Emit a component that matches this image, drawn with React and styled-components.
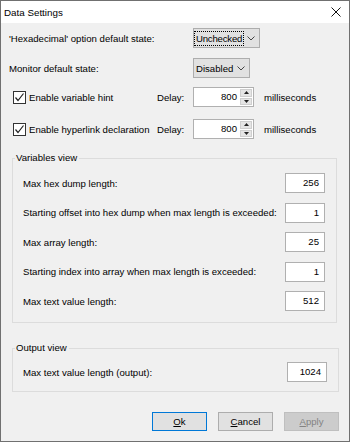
import React from 'react'
import styled, { createGlobalStyle } from 'styled-components'

const Global = createGlobalStyle`
  html, body { margin:0; padding:0; background:#f0f0f0; }
  body {
    font-family:"Liberation Sans", Arial, sans-serif;
    font-size:9.6px;
    color:#000;
    white-space:nowrap;
  }
`

const Window = styled.div`
  width:350px;
  height:442px;
  box-sizing:border-box;
  border:1px solid #707070;
  background:#f0f0f0;
  display:flex;
  flex-direction:column;
`

const TitleBar = styled.div`
  height:22px;
  background:#fff;
  display:flex;
  align-items:center;
  justify-content:space-between;
  padding:0 8px 0 3px;
  font-size:9.8px;
`

const Body = styled.div`
  display:flex;
  flex-direction:column;
  padding:5px 10px 0 8px;
`

const Row = styled.div`
  display:grid;
  grid-template-columns:${p => p.$cols};
  align-items:center;
  height:20px;
  margin-top:${p => p.$gap || 0}px;
`

const Combo = styled.div`
  box-sizing:border-box;
  width:${p => p.$w}px;
  height:20px;
  background:#e1e1e1;
  border:1px solid #adadad;
  display:flex;
  align-items:center;
  justify-content:space-between;
  padding:0 4px 0 2px;
`

const Focus = styled.span`
  outline:1px dotted #000;
  outline-offset:1px;
  letter-spacing:-0.2px;
`

const Check = styled.label`
  display:flex;
  align-items:center;
  gap:3px;
  padding-left:4px;
`

const Box = styled.span`
  box-sizing:border-box;
  width:13px;
  height:13px;
  border:1px solid #333;
  background:#fff;
  display:flex;
  align-items:center;
  justify-content:center;
`

const Spin = styled.div`
  box-sizing:border-box;
  width:61px;
  height:20px;
  border:1px solid #b0b0b0;
  background:#fff;
  display:flex;
  align-items:stretch;
`

const SpinValue = styled.span`
  flex:1;
  text-align:right;
  padding-right:3px;
  line-height:18px;
`

const SpinBtns = styled.div`
  width:12px;
  display:flex;
  flex-direction:column;
  gap:1px;
  padding:1px 1px 1px 0;
`

const SpinBtn = styled.span`
  flex:1;
  background:#e5e5e5;
  border:1px solid #cfcfcf;
  display:flex;
  align-items:center;
  justify-content:center;
`

const Ms = styled.span`
  padding-left:10px;
`

const Group = styled.fieldset`
  margin:${p => p.$top}px ${p => p.$right}px 0 3px;
  padding:${p => p.$pt}px 11px ${p => p.$pb}px 10px;
  border:1px solid #dcdcdc;
  display:flex;
  flex-direction:column;
  gap:9.5px;
  min-width:0;
`

const Legend = styled.legend`
  padding:0 2px 0 1px;
  margin-left:-8px;
  line-height:12px;
`

const NumBox = styled.div`
  box-sizing:border-box;
  width:40px;
  height:20px;
  border:1px solid #b0b0b0;
  background:#fff;
  text-align:right;
  padding-right:5px;
  line-height:18px;
  justify-self:end;
`

const Buttons = styled.div`
  display:flex;
  justify-content:flex-end;
  gap:11px;
  margin-top:20px;
`

const Button = styled.div`
  box-sizing:border-box;
  width:55px;
  height:19px;
  display:flex;
  align-items:center;
  justify-content:center;
  background:${p => (p.$disabled ? '#cccccc' : '#e1e1e1')};
  border:1px solid ${p => (p.$default ? '#0078d7' : p.$disabled ? '#bfbfbf' : '#adadad')};
  color:${p => (p.$disabled ? '#838383' : '#000')};
  u { text-decoration:underline; }
`

const Chevron = () => (
  <svg width="8" height="5" viewBox="0 0 8 5">
    <path d="M0.5 0.5 L4 4 L7.5 0.5" fill="none" stroke="#444" strokeWidth="1" />
  </svg>
)

const Tick = () => (
  <svg width="11" height="11" viewBox="0 0 11 11">
    <path d="M1.5 5.5 L4 8.5 L9.5 1.5" fill="none" stroke="#222" strokeWidth="1.2" />
  </svg>
)

const Arrow = ({ up }) => (
  <svg width="5" height="3" viewBox="0 0 5 3">
    <path d={up ? 'M0 3 L2.5 0 L5 3 Z' : 'M0 0 L5 0 L2.5 3 Z'} fill="#222" />
  </svg>
)

const SpinBox = ({ value }) => (
  <Spin>
    <SpinValue>{value}</SpinValue>
    <SpinBtns>
      <SpinBtn><Arrow up /></SpinBtn>
      <SpinBtn><Arrow /></SpinBtn>
    </SpinBtns>
  </Spin>
)

const variables = [
  ['Max hex dump length:', '256'],
  ['Starting offset into hex dump when max length is exceeded:', '1'],
  ['Max array length:', '25'],
  ['Starting index into array when max length is exceeded:', '1'],
  ['Max text value length:', '512'],
]

const App = () => {
  return (
    <Window>
      <Global />
      <TitleBar>
        <span>Data Settings</span>
        <svg width="10" height="10" viewBox="0 0 10 10">
          <path d="M0.5 0.5 L9.5 9.5 M9.5 0.5 L0.5 9.5" stroke="#111" strokeWidth="1" />
        </svg>
      </TitleBar>
      <Body>
        <Row $cols="184px auto">
          <span>'Hexadecimal' option default state:</span>
          <Combo $w={67}>
            <Focus>Unchecked</Focus>
            <Chevron />
          </Combo>
        </Row>
        <Row $cols="184px auto" $gap={10}>
          <span>Monitor default state:</span>
          <Combo $w={57}>
            <span>Disabled</span>
            <Chevron />
          </Combo>
        </Row>
        <Row $cols="148px 36px 61px 1fr" $gap={9}>
          <Check><Box><Tick /></Box>Enable variable hint</Check>
          <span>Delay:</span>
          <SpinBox value="800" />
          <Ms>milliseconds</Ms>
        </Row>
        <Row $cols="148px 36px 61px 1fr" $gap={12}>
          <Check><Box><Tick /></Box>Enable hyperlink declaration</Check>
          <span>Delay:</span>
          <SpinBox value="800" />
          <Ms>milliseconds</Ms>
        </Row>
        <Group $top={13} $right={2} $pt={9} $pb={11}>
          <Legend>Variables view</Legend>
          {variables.map(([label, value]) => (
            <Row key={label} $cols="1fr auto">
              <span>{label}</span>
              <NumBox>{value}</NumBox>
            </Row>
          ))}
        </Group>
        <Group $top={19} $right={0} $pt={8} $pb={9}>
          <Legend>Output view</Legend>
          <Row $cols="1fr auto">
            <span>Max text value length (output):</span>
            <NumBox>1024</NumBox>
          </Row>
        </Group>
        <Buttons>
          <Button $default><span><u>O</u>k</span></Button>
          <Button><span><u>C</u>ancel</span></Button>
          <Button $disabled><span><u>A</u>pply</span></Button>
        </Buttons>
      </Body>
    </Window>
  )
}

export default App
